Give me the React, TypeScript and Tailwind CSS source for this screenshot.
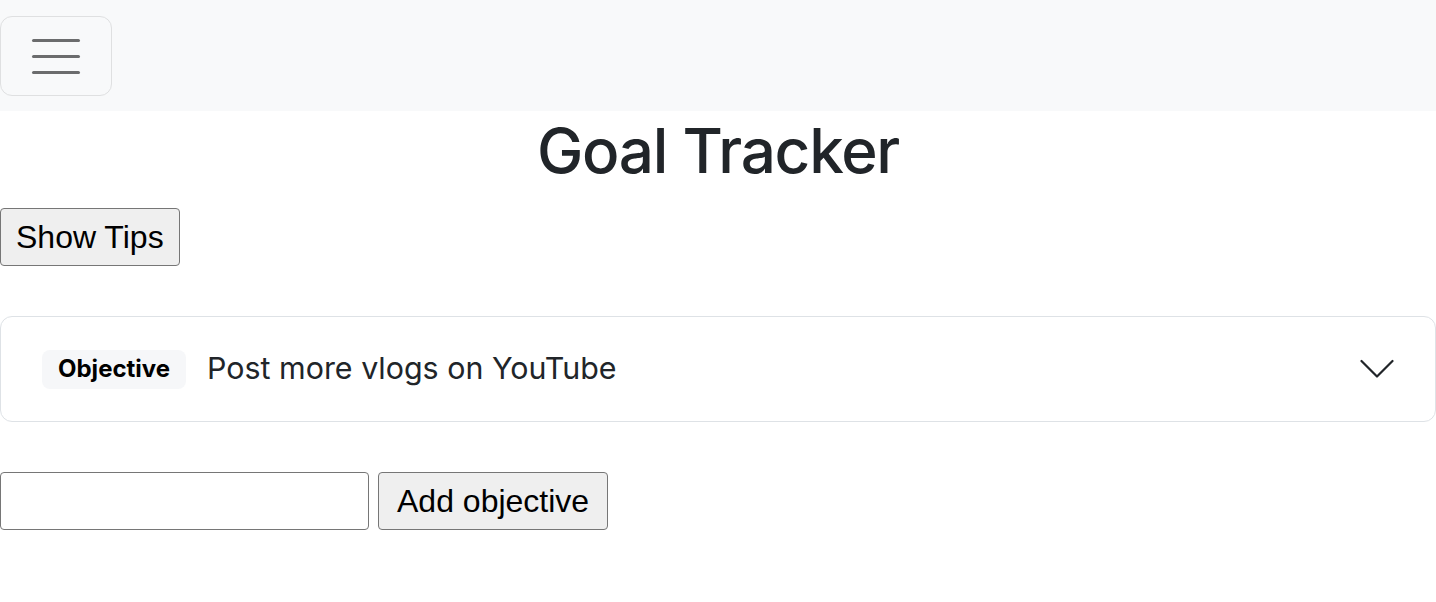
import React from "react";

export default function App() {
  return (
    <div className="w-[1436px] h-[602px] bg-white overflow-hidden" style={{ fontFamily: '"Liberation Sans", Arial, sans-serif' }}>
      <nav className="h-[111px] bg-[#f8f9fa] flex items-start pt-[16px]">
        <button className="w-[112px] h-[80px] border border-[#dfe0e1] rounded-[12px] flex flex-col items-center justify-center gap-[13px]">
          <span className="block w-[48px] h-[3px] rounded-full bg-[#6b6c6d]" />
          <span className="block w-[48px] h-[3px] rounded-full bg-[#6b6c6d]" />
          <span className="block w-[48px] h-[3px] rounded-full bg-[#6b6c6d]" />
        </button>
      </nav>
      <h1 className="text-center text-[#212529] text-[62px] leading-[60px] font-medium mt-[10px] tracking-[-0.02em] font-['Inter',sans-serif]">Goal Tracker</h1>
      <div className="mt-[27px]">
        <button className="h-[58px] px-[15px] bg-[#efefef] border border-[#767676] rounded-[4px] text-[32px] text-black leading-none">Show Tips</button>
      </div>
      <div className="mt-[50px] w-[1436px] h-[106px] border border-[#dee2e6] rounded-[12px] flex items-center pl-[41px] pr-[41px] font-['Inter',sans-serif]">
        <span className="h-[39px] px-[16px] bg-[#f6f7f9] rounded-[8px] flex items-center text-[24px] font-bold text-black">Objective</span>
        <span className="ml-[21px] text-[30.4px] text-[#212529]">Post more vlogs on YouTube</span>
        <svg className="ml-auto" width="34" height="20" viewBox="0 0 34 20" fill="none">
          <path d="M1.5 2 L17 17.5 L32.5 2" stroke="#212529" strokeWidth="2.2" strokeLinecap="round" strokeLinejoin="round" />
        </svg>
      </div>
      <div className="mt-[50px] flex gap-[9px]">
        <input className="w-[369px] h-[58px] border border-[#767676] rounded-[4px] bg-white" />
        <button className="h-[58px] px-[18px] bg-[#efefef] border border-[#767676] rounded-[4px] text-[32px] text-black leading-none">Add objective</button>
      </div>
    </div>
  );
}
